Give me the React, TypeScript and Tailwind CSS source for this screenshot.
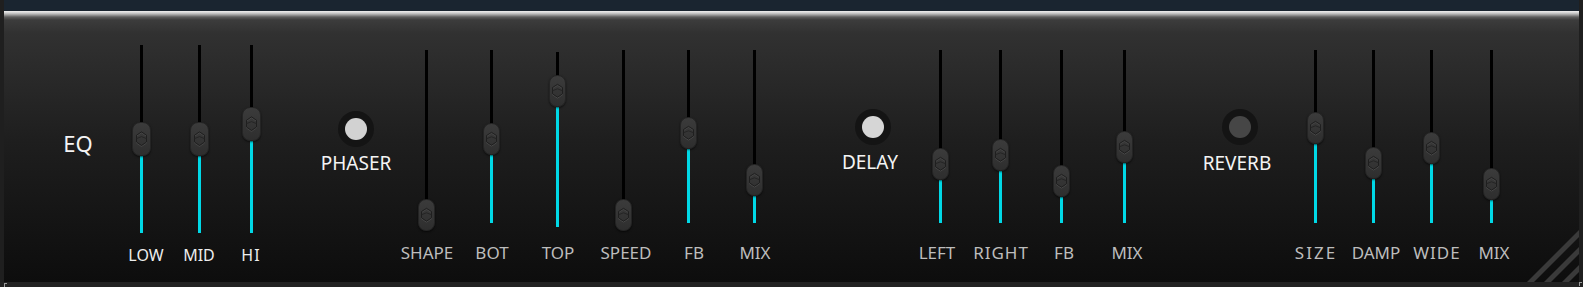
import React from "react";

type SliderDef = {
  label: string;
  ml: string;
  mt: string;
  h: string;
  thumb: number;
  lg: string;
  nudge?: string;
  eq?: boolean;
};

function Thumb({ top, eq }: { top: number; eq?: boolean }) {
  const w = eq ? 19 : 17;
  const h = eq ? 34 : 32;
  const c = (w - 2) / 2;
  const hex = `M${c - 5} ${h * 0.36} L${c} ${h * 0.26} L${c + 5} ${h * 0.36} L${c + 5} ${h * 0.56} L${c} ${h * 0.66} L${c - 5} ${h * 0.56} Z`;
  return (
    <div
      className={`absolute rounded-[8px] border border-[#242424] bg-[linear-gradient(to_bottom,#3b3b3b,#2e2e2e)] shadow-[0_1px_2px_rgba(0,0,0,0.6)] ${
        eq ? "left-[10px] h-[34px] w-[19px]" : "left-[11px] h-[32px] w-[17px]"
      }`}
      style={{ top }}
    >
      <svg width={w - 2} height={h - 2} viewBox={`0 0 ${w - 2} ${h - 2}`} className="block">
        <path d={hex} fill="none" stroke="#464646" strokeWidth="1" transform="translate(0,1)" />
        <path d={hex} fill="none" stroke="#1f1f1f" strokeWidth="1" />
        <path
          d={`M${c - 5} ${h * 0.46} L${c} ${h * 0.4} L${c + 5} ${h * 0.46}`}
          fill="none"
          stroke="#242424"
          strokeWidth="1"
        />
      </svg>
    </div>
  );
}

function Slider({ label, ml, mt, h, thumb, lg, nudge, eq }: SliderDef) {
  const th = eq ? 34 : 32;
  return (
    <div className={`flex w-[40px] shrink-0 flex-col items-center ${ml} ${mt}`}>
      <div className={`relative w-[40px] ${h}`}>
        <div className="absolute left-[18px] top-0 h-full w-[3px] bg-black" />
        <div className="absolute bottom-0 left-[18px] w-[3px] bg-[#00d8e6]" style={{ top: thumb + th }} />
        <Thumb top={thumb} eq={eq} />
      </div>
      <div
        className={`whitespace-nowrap ${lg} ${nudge ?? ""} ${
          eq ? "text-[16px] leading-[20px] text-[#ededed]" : "text-[17px] leading-[20px] text-[#bdbdbd]"
        }`}
      >
        {label}
      </div>
    </div>
  );
}

function Toggle({
  label,
  ml,
  mt,
  tg,
  on,
}: {
  label: string;
  ml: string;
  mt: string;
  tg: string;
  on: string;
}) {
  return (
    <div className={`flex w-[80px] shrink-0 flex-col items-center ${ml} ${mt}`}>
      <div className="flex h-[36px] w-[36px] items-center justify-center rounded-full bg-[#141414]">
        <div className={`h-[22px] w-[22px] rounded-full ${on}`} />
      </div>
      <div className={`whitespace-nowrap text-[19px] leading-[22px] text-[#f4f4f4] ${tg}`}>{label}</div>
    </div>
  );
}

const eqSliders: SliderDef[] = [
  { label: "LOW", ml: "ml-[24px]", mt: "mt-[34px]", h: "h-[188px]", thumb: 77, lg: "mt-[12px]", nudge: "translate-x-[4px]", eq: true },
  { label: "MID", ml: "ml-[18px]", mt: "mt-[34px]", h: "h-[188px]", thumb: 77, lg: "mt-[12px]", nudge: "-translate-x-[1px]", eq: true },
  { label: "HI", ml: "ml-[12px]", mt: "mt-[34px]", h: "h-[188px]", thumb: 62, lg: "mt-[12px]", nudge: "-translate-x-[1px] tracking-[1px]", eq: true },
];

const phaser: SliderDef[] = [
  { label: "SHAPE", ml: "ml-[11px]", mt: "mt-[39px]", h: "h-[173px]", thumb: 149, lg: "mt-[20px]" },
  { label: "BOT", ml: "ml-[25px]", mt: "mt-[39px]", h: "h-[173px]", thumb: 73, lg: "mt-[20px]" },
  { label: "TOP", ml: "ml-[26px]", mt: "mt-[41px]", h: "h-[175px]", thumb: 23, lg: "mt-[16px]" },
  { label: "SPEED", ml: "ml-[26px]", mt: "mt-[39px]", h: "h-[173px]", thumb: 149, lg: "mt-[20px]", nudge: "translate-x-[2px]" },
  { label: "FB", ml: "ml-[25px]", mt: "mt-[39px]", h: "h-[173px]", thumb: 67, lg: "mt-[20px]", nudge: "translate-x-[5px]" },
  { label: "MIX", ml: "ml-[26px]", mt: "mt-[39px]", h: "h-[173px]", thumb: 114, lg: "mt-[20px]" },
];

const delay: SliderDef[] = [
  { label: "LEFT", ml: "ml-[8px]", mt: "mt-[39px]", h: "h-[173px]", thumb: 98, lg: "mt-[20px]", nudge: "-translate-x-[4px]" },
  { label: "RIGHT", ml: "ml-[20px]", mt: "mt-[39px]", h: "h-[173px]", thumb: 89, lg: "mt-[20px]", nudge: "tracking-[1px]" },
  { label: "FB", ml: "ml-[21px]", mt: "mt-[39px]", h: "h-[173px]", thumb: 115, lg: "mt-[20px]", nudge: "translate-x-[2px]" },
  { label: "MIX", ml: "ml-[23px]", mt: "mt-[39px]", h: "h-[173px]", thumb: 81, lg: "mt-[20px]", nudge: "translate-x-[2px]" },
];

const reverb: SliderDef[] = [
  { label: "SIZE", ml: "ml-[16px]", mt: "mt-[39px]", h: "h-[173px]", thumb: 62, lg: "mt-[20px]", nudge: "tracking-[2px]" },
  { label: "DAMP", ml: "ml-[18px]", mt: "mt-[39px]", h: "h-[173px]", thumb: 97, lg: "mt-[20px]", nudge: "translate-x-[2px]" },
  { label: "WIDE", ml: "ml-[18px]", mt: "mt-[39px]", h: "h-[173px]", thumb: 82, lg: "mt-[20px]", nudge: "translate-x-[5px] tracking-[1px]" },
  { label: "MIX", ml: "ml-[20px]", mt: "mt-[39px]", h: "h-[173px]", thumb: 118, lg: "mt-[20px]", nudge: "translate-x-[2px]" },
];

export default function App() {
  return (
    <div className="flex h-[287px] w-[1583px] flex-col overflow-hidden bg-[#212121] font-['Noto_Sans','DejaVu_Sans',sans-serif]">
      <div className="flex h-[11px] shrink-0">
        <div className="w-[4px] bg-[#1f1f1f]" />
        <div className="flex-1 bg-[#1a2530]" />
        <div className="w-[4px] bg-[#1f1f1f]" />
      </div>
      <div className="flex h-[271px] shrink-0">
        <div className="w-[4px] bg-[#1f1f1f]" />
        <div className="relative flex flex-1 items-start bg-[linear-gradient(to_bottom,#f0f0f0_0px,#cfcfcf_2px,#9a9a9a_4px,#5e5e5e_6px,#3c3c3c_9px,#313131_22px,#1e1e1e_130px,#0d0d0d_100%)]">
          <div className="ml-[54px] mt-[118px] w-[40px] shrink-0 text-center text-[22px] leading-[28px] text-[#f4f4f4]">
            EQ
          </div>
          {eqSliders.map((s, i) => (
            <Slider key={"e" + i} {...s} />
          ))}
          <Toggle label="PHASER" ml="ml-[44px]" mt="mt-[100px]" tg="mt-[5px]" on="bg-[#d2d2d2]" />
          {phaser.map((s, i) => (
            <Slider key={"p" + i} {...s} />
          ))}
          <Toggle label="DELAY" ml="ml-[58px]" mt="mt-[98px]" tg="mt-[6px] -translate-x-[3px]" on="bg-[#d6d6d6]" />
          {delay.map((s, i) => (
            <Slider key={"d" + i} {...s} />
          ))}
          <Toggle label="REVERB" ml="ml-[55px]" mt="mt-[98px]" tg="mt-[7px] -translate-x-[3px]" on="bg-[#464646]" />
          {reverb.map((s, i) => (
            <Slider key={"r" + i} {...s} />
          ))}
          <svg className="absolute bottom-0 right-0" width="60" height="55" viewBox="0 0 60 55">
            <polygon points="8,55 15,55 60,10 60,3" fill="#3a3a3a" />
            <polygon points="25,55 32,55 60,27 60,20" fill="#3a3a3a" />
            <polygon points="43,55 50,55 60,45 60,38" fill="#3a3a3a" />
          </svg>
        </div>
        <div className="w-[4px] bg-[#1f1f1f]" />
      </div>
      <div className="flex h-[5px] shrink-0 bg-[#222222]">
        <div className="ml-[4px] mt-[1px] h-[4px] w-[3px] border-l border-t border-[#9a9a9a]" />
        <div className="flex-1" />
        <div className="mr-[1px] h-[4px] w-[3px] border-l border-t border-[#9a9a9a]" />
      </div>
    </div>
  );
}
